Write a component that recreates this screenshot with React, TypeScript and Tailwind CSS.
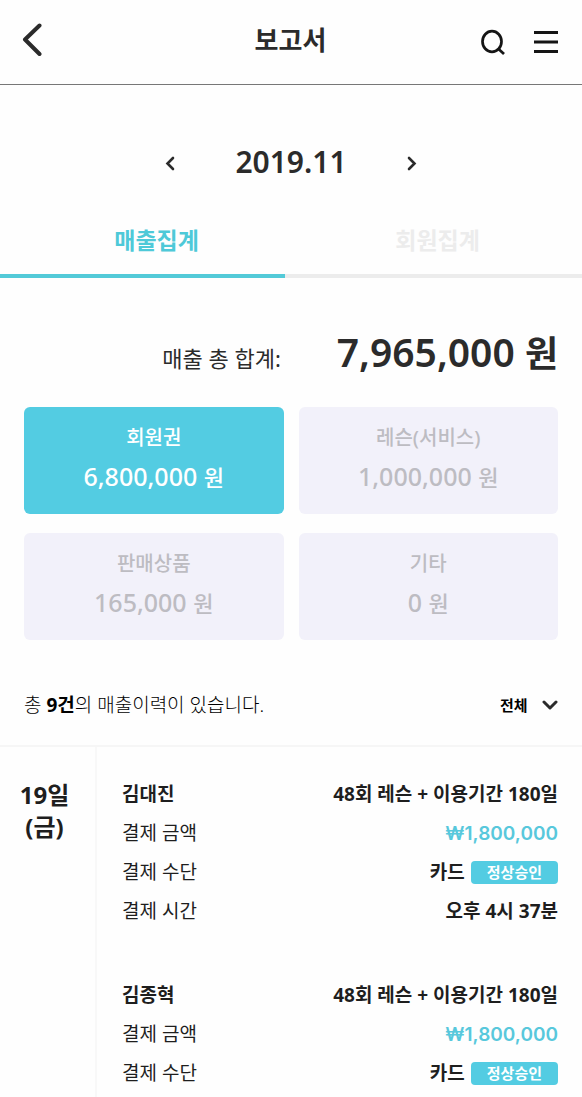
import React, { useState } from 'react';

interface Category {
  id: string;
  name: string;
  amount: number;
}

interface Payment {
  id: number;
  name: string;
  product: string;
  amount: number;
  method: string;
  status: string;
  time?: string;
}

const categories: Category[] = [
  { id: 'membership', name: '회원권', amount: 6800000 },
  { id: 'lesson', name: '레슨(서비스)', amount: 1000000 },
  { id: 'product', name: '판매상품', amount: 165000 },
  { id: 'etc', name: '기타', amount: 0 },
];

const payments: Payment[] = [
  {
    id: 1,
    name: '김대진',
    product: '48회 레슨 + 이용기간 180일',
    amount: 1800000,
    method: '카드',
    status: '정상승인',
    time: '오후 4시 37분',
  },
  {
    id: 2,
    name: '김종혁',
    product: '48회 레슨 + 이용기간 180일',
    amount: 1800000,
    method: '카드',
    status: '정상승인',
  },
];

const formatNumber = (value: number) => value.toLocaleString('en-US');

function Header() {
  return (
    <header className="grid h-[85px] grid-cols-3 items-center border-b border-[#777] pb-1 pl-[22px] pr-[23px]">
      <button type="button" aria-label="뒤로" className="justify-self-start">
        <svg width="20" height="34" viewBox="0 0 20 34" fill="none" stroke="#2b2b2b" strokeWidth="4" strokeLinecap="round" strokeLinejoin="round">
          <path d="M17.500 2.500 L3 16.500 L17.500 31" />
        </svg>
      </button>
      <h1 className="justify-self-center text-[26px] font-bold leading-8">보고서</h1>
      <div className="flex items-center gap-7 justify-self-end pt-1">
        <button type="button" aria-label="검색">
          <svg width="26" height="26" viewBox="0 0 26 26" fill="none" stroke="#151515" strokeWidth="2.700">
            <ellipse cx="12" cy="12.500" rx="9.500" ry="10.300" />
            <path d="M18 19.500 L24 25" />
          </svg>
        </button>
        <button type="button" aria-label="메뉴">
          <svg width="25" height="24" viewBox="0 0 25 24" stroke="#151515" strokeWidth="2.800">
            <path d="M0 2.500 H24 M0 12 H24 M0 21.500 H24" />
          </svg>
        </button>
      </div>
    </header>
  );
}

function MonthPicker() {
  return (
    <div className="mt-14 flex h-10 items-center justify-center gap-[60px]">
      <button type="button" aria-label="이전 달" className="pt-1">
        <svg width="10" height="15" viewBox="0 0 10 15" fill="none" stroke="#2b2b2b" strokeWidth="2.600" strokeLinecap="round">
          <path d="M8 2 L2.500 7.500 L8 13" />
        </svg>
      </button>
      <span className="pt-0.5 text-[30px] font-semibold leading-10">2019.11</span>
      <button type="button" aria-label="다음 달" className="pt-1">
        <svg width="10" height="15" viewBox="0 0 10 15" fill="none" stroke="#2b2b2b" strokeWidth="2.600" strokeLinecap="round">
          <path d="M2 2 L7.500 7.500 L2 13" />
        </svg>
      </button>
    </div>
  );
}

function PaymentItem({ payment }: { payment: Payment }) {
  return (
    <dl className="text-[19px] leading-[39px]">
      <div className="flex justify-between font-bold">
        <dt>{payment.name}</dt>
        <dd>{payment.product}</dd>
      </div>
      <div className="flex justify-between">
        <dt>결제 금액</dt>
        <dd className="font-['Inter'] font-semibold text-[#58c8dc]">₩{formatNumber(payment.amount)}</dd>
      </div>
      <div className="flex justify-between">
        <dt>결제 수단</dt>
        <dd className="flex items-center gap-1.5 font-bold">
          {payment.method}
          <span className="rounded-sm bg-[#53cce2] px-4 text-[15px] leading-[23px] text-white">{payment.status}</span>
        </dd>
      </div>
      {payment.time && (
        <div className="flex justify-between">
          <dt>결제 시간</dt>
          <dd className="font-bold">{payment.time}</dd>
        </div>
      )}
    </dl>
  );
}

export default function App() {
  const [activeTab, setActiveTab] = useState('sales');
  const [activeCategory, setActiveCategory] = useState('membership');

  const total = categories.reduce((sum, category) => sum + category.amount, 0);

  const tabColor = (tab: string) =>
    tab === activeTab ? 'border-[#53cad8] text-[#4ec9d8]' : 'border-[#ececec] text-[#ececec]';

  return (
    <div className="flex min-h-screen flex-col bg-[#fefefe] font-['Noto_Sans','Noto_Sans_CJK_KR',sans-serif] text-[#2b2b2b]">
      <Header />
      <MonthPicker />

      <nav className="mt-[39px] flex text-[23px] font-bold leading-10">
        <button
          type="button"
          onClick={() => setActiveTab('sales')}
          className={`w-[49%] border-b-4 pb-3.5 pl-7 ${tabColor('sales')}`}
        >
          매출집계
        </button>
        <button
          type="button"
          onClick={() => setActiveTab('members')}
          className={`flex-1 border-b-4 pb-3.5 pl-2 ${tabColor('members')}`}
        >
          회원집계
        </button>
      </nav>

      {/* Total and categories */}
      <section className="px-6">
        <div className="mt-12 flex items-baseline justify-end gap-14">
          <span className="text-[22px]">매출 총 합계:</span>
          <strong className="text-[39px] font-semibold leading-[52px]">
            {formatNumber(total)} <span className="text-[36px] font-bold">원</span>
          </strong>
        </div>

        <div className="mt-[27px] grid grid-cols-2 gap-x-[15px] gap-y-[19px]">
          {categories.map(category => (
            <button
              key={category.id}
              type="button"
              onClick={() => setActiveCategory(category.id)}
              className={`h-[107px] rounded-md pb-1.5 font-medium ${
                category.id === activeCategory ? 'bg-[#53cce2] text-white' : 'bg-[#f2f1fa] text-[#bdbcc2]'
              }`}
            >
              <span className="block text-[20px] leading-[38px]">{category.name}</span>
              <span className="block text-[25px] leading-[38px]">
                {formatNumber(category.amount)} <span className="text-[22px]">원</span>
              </span>
            </button>
          ))}
        </div>

        <div className="mt-[45px] flex h-10 items-center justify-between">
          <p className="text-[19px] font-light text-black">
            총 <b className="font-bold">9건</b>의 매출이력이 있습니다.
          </p>
          <div className="relative">
            <select aria-label="결제 구분" className="appearance-none bg-transparent pr-[30px] text-[15px] font-bold text-black">
              <option>전체</option>
            </select>
            <svg className="pointer-events-none absolute right-0 top-1/2 -translate-y-1/2" width="16" height="10" viewBox="0 0 16 10" fill="none" stroke="#2b2b2b" strokeWidth="3" strokeLinecap="round" strokeLinejoin="round">
              <path d="M2 2 L8 8 L14 2" />
            </svg>
          </div>
        </div>
      </section>

      {/* Payment history */}
      <section className="mt-5 flex flex-1 border-t-2 border-[#f6f6f6] text-[#1e1e1e]">
        <h2 className="w-[97px] shrink-0 border-r-2 border-[#f8f8f8] pt-8 pr-1.5 text-center text-[24px] font-bold leading-8">
          19일
          <br />
          (금)
        </h2>
        <div className="flex flex-1 flex-col gap-[45px] pl-[25px] pr-6 pt-7">
          {payments.map(payment => (
            <PaymentItem key={payment.id} payment={payment} />
          ))}
        </div>
      </section>
    </div>
  );
}
